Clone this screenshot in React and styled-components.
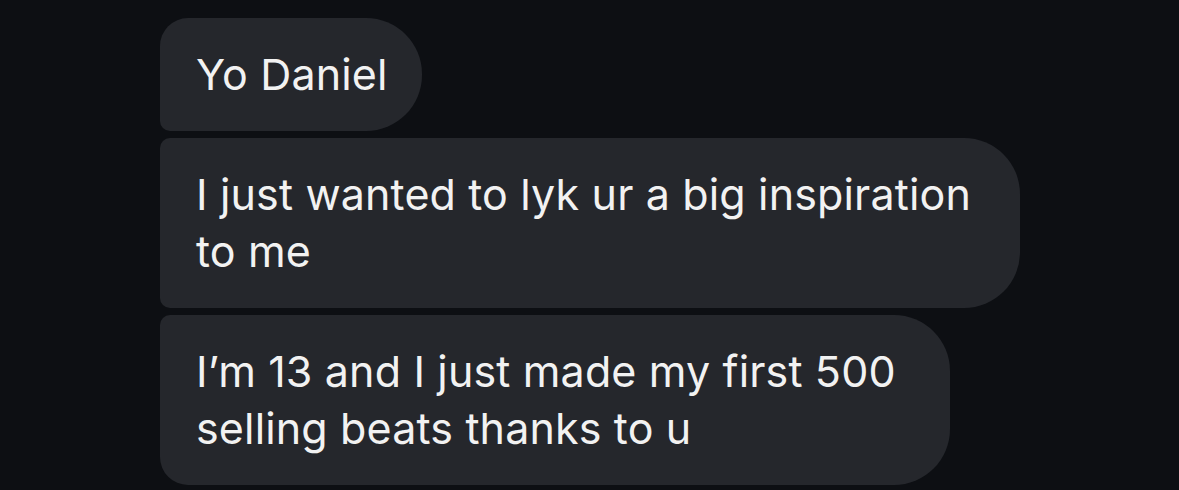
import styled, { createGlobalStyle } from "styled-components";

const GlobalStyle = createGlobalStyle`
  html, body {
    margin: 0;
    background: #0d0f13;
  }
`;

const Thread = styled.div`
  display: flex;
  flex-direction: column;
  align-items: flex-start;
  gap: 7px;
  padding: 18px 0 0 160px;
  min-height: 490px;
  box-sizing: border-box;
  font-family: Inter, "Noto Sans", sans-serif;
`;

const Bubble = styled.div`
  background: #25272c;
  color: #f2f2f2;
  font-size: 43px;
  line-height: 57px;
  letter-spacing: 0.15px;
  padding: 28px ${(p) => p.$padRight || 49}px 28px 36px;
  white-space: nowrap;
  border-radius: ${(p) => (p.$first ? 28 : 10)}px 56px 56px
    ${(p) => (p.$last ? 28 : 10)}px;
`;

export default function App() {
  return (
    <>
      <GlobalStyle />
      <Thread>
        <Bubble $first $padRight={34}>Yo Daniel</Bubble>
        <Bubble>
          I just wanted to lyk ur a big inspiration
          <br />
          to me
        </Bubble>
        <Bubble $last $padRight={54}>
          I’m 13 and I just made my first 500
          <br />
          selling beats thanks to u
        </Bubble>
      </Thread>
    </>
  );
}
